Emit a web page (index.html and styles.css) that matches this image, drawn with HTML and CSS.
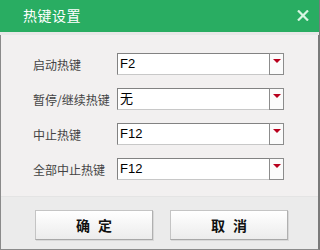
FILE: index.html
```html
<!DOCTYPE html>
<html lang="zh-CN">
<head>
  <meta charset="UTF-8">
  <title>热键设置</title>
  <link rel="stylesheet" href="styles.css">
</head>
<body>
  <div class="dialog">
    <div class="titlebar">
      <span class="title">热键设置</span>
      <span class="close">
        <svg width="12" height="11" viewBox="0 0 12 11">
          <path d="M1 0.5 L11 10.5 M11 0.5 L1 10.5" stroke="#d8f5e2" stroke-width="2.2"/>
        </svg>
      </span>
    </div>
    <div class="content">
      <div class="row">
        <label>启动热键</label>
        <div class="select"><span class="value">F2</span><span class="arrow"></span></div>
      </div>
      <div class="row">
        <label>暂停/继续热键</label>
        <div class="select"><span class="value">无</span><span class="arrow"></span></div>
      </div>
      <div class="row">
        <label>中止热键</label>
        <div class="select"><span class="value">F12</span><span class="arrow"></span></div>
      </div>
      <div class="row">
        <label>全部中止热键</label>
        <div class="select"><span class="value">F12</span><span class="arrow"></span></div>
      </div>
    </div>
    <div class="footer">
      <button class="btn">确 定</button>
      <button class="btn">取 消</button>
    </div>
  </div>
</body>
</html>
```

FILE: styles.css
```css
body {
  margin: 0;
  padding: 0;
  font-family: "Noto Sans CJK SC", "Liberation Sans", sans-serif;
}
.dialog {
  width: 320px;
  height: 250px;
  box-sizing: border-box;
  border: 1px solid #8a8a8a;
  border-top: none;
  border-right: 2px solid #7a7a7a;
  background: #f0f0f0;
  display: flex;
  flex-direction: column;
}
.titlebar {
  height: 32px;
  margin: 0 -1px 0 -1px;
  background: #29ad62;
  display: flex;
  align-items: center;
  justify-content: space-between;
  padding: 0 10px 0 23px;
  border-bottom: 3px solid #e8e8e8;
}
.title {
  color: #fff;
  font-size: 14px;
  letter-spacing: 0.5px;
  margin-top: -2px;
}
.close {
  display: flex;
  margin-top: -1px;
}
.content {
  flex: 1;
  padding: 18px 0 0 32px;
  display: flex;
  flex-direction: column;
  gap: 13px;
  background: #f2f0f0;
}
.row {
  display: flex;
  align-items: center;
  height: 22px;
}
.row label {
  width: 84px;
  font-size: 12px;
  color: #444;
}
.select {
  width: 167px;
  height: 22px;
  box-sizing: border-box;
  border: 1px solid #828282;
  border-right-color: #a0a0a0;
  border-bottom-color: #c8c8c8;
  background: #fff;
  display: flex;
  align-items: stretch;
}
.value {
  flex: 1;
  padding-left: 2px;
  font-family: "Liberation Sans", "Noto Sans CJK SC", sans-serif;
  font-size: 13px;
  line-height: 20px;
  color: #000;
}
.arrow {
  width: 15px;
  border: 1px solid #8c8c8c;
  margin: -1px -1px -1px 0;
  background: #fbfbfb;
  display: flex;
  justify-content: center;
  padding-top: 5px;
  box-sizing: border-box;
}
.arrow::before {
  content: "";
  width: 0;
  height: 0;
  border-left: 4px solid transparent;
  border-right: 4px solid transparent;
  border-top: 4px solid #b8001c;
}
.footer {
  height: 53px;
  box-sizing: border-box;
  border-top: 1px solid #e4e4e4;
  background: #ebebeb;
  display: flex;
  gap: 17px;
  padding: 13px 0 0 34px;
}
.btn {
  width: 118px;
  height: 30px;
  border: 1px solid #c4c4c4;
  border-right-color: #b0b0b0;
  border-bottom-color: #a8a8a8;
  background: linear-gradient(#ffffff, #ececec);
  font-family: "Noto Sans CJK SC", sans-serif;
  font-weight: bold;
  font-size: 14px;
  word-spacing: 5px;
  color: #111;
  padding: 0;
  box-shadow: 1px 1px 0 #d8d8d8;
}
```
